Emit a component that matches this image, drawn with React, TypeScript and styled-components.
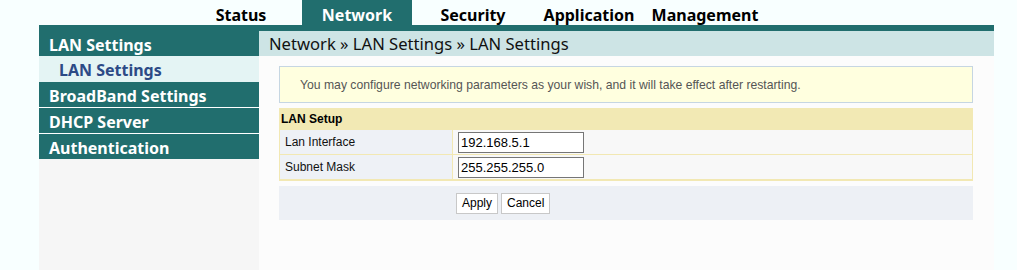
import React from "react";
import styled, { createGlobalStyle } from "styled-components";

const GlobalStyle = createGlobalStyle`
  html, body { margin: 0; padding: 0; background: #f8ffff; }
  body { font-family: "Noto Sans", "Open Sans", sans-serif; }
`;

const TEAL = "#216e6e";
const UI_FONT = `"Noto Sans", "Open Sans", sans-serif`;
const FORM_FONT = `"Liberation Sans", Arial, sans-serif`;

const Page = styled.div`
  padding-left: 39px;
  width: 955px;
  min-height: 270px;
  display: flex;
  flex-direction: column;
`;

const TopNav = styled.nav`
  display: flex;
  height: 25px;
  padding-left: 144px;
`;

const Tab = styled.div`
  width: 116px;
  display: flex;
  justify-content: center;
  padding: 0 3px;
  box-sizing: border-box;
`;

const TabLabel = styled.span<{ $active?: boolean }>`
  flex: 1;
  text-align: center;
  white-space: nowrap;
  font-family: ${UI_FONT};
  font-weight: 700;
  font-size: 16px;
  line-height: 31px;
  height: 25px;
  overflow: visible;
  color: ${(p) => (p.$active ? "#ffffff" : "#000000")};
  background: ${(p) => (p.$active ? TEAL : "transparent")};
`;

const Strip = styled.div`
  height: 6px;
  background: ${TEAL};
`;

const Body = styled.div`
  flex: 1;
  display: flex;
`;

const Sidebar = styled.aside`
  width: 220px;
  background: #f6f6f6;
  display: flex;
  flex-direction: column;
`;

const MenuHead = styled.div<{ $sep?: boolean }>`
  height: 25px;
  line-height: 28px;
  padding-left: 10px;
  background: ${TEAL};
  color: #ffffff;
  font-family: ${UI_FONT};
  font-weight: 700;
  font-size: 16px;
  white-space: nowrap;
  border-top: ${(p) => (p.$sep ? "1px solid #ffffff" : "none")};
`;

const SubItem = styled.div`
  height: 26px;
  line-height: 28px;
  padding-left: 20px;
  background: #e4f4f4;
  color: #2c4a86;
  font-family: ${UI_FONT};
  font-weight: 700;
  font-size: 16px;
`;

const Main = styled.main`
  flex: 1;
  background: #fcfcfc;
  display: flex;
  flex-direction: column;
`;

const Crumb = styled.div`
  height: 25px;
  line-height: 25px;
  padding-left: 10px;
  background: #cde4e5;
  color: #111;
  font-family: ${UI_FONT};
  font-size: 16.6px;
`;

const Content = styled.div`
  padding: 10px 21px 0 20px;
  display: flex;
  flex-direction: column;
`;

const Notice = styled.div`
  height: 35px;
  border: 1px solid #c6d6e2;
  background: #ffffdf;
  display: flex;
  align-items: center;
  padding-left: 20px;
  font-family: ${FORM_FONT};
  font-size: 12.2px;
  color: #555555;
  margin-bottom: 5px;
`;

const Table = styled.div`
  display: grid;
  grid-template-columns: 173px 1fr;
  border: 1px solid #f2e8b3;
  border-top: none;
  border-bottom-width: 2px;
`;

const TableHead = styled.div`
  grid-column: 1 / -1;
  height: 22px;
  line-height: 22px;
  background: #f2e9b4;
  font-family: ${FORM_FONT};
  font-weight: 700;
  font-size: 12px;
  color: #000;
  padding-left: 2px;
  margin: 0 -1px;
`;

const LabelCell = styled.div<{ $last?: boolean }>`
  height: 24px;
  display: flex;
  align-items: center;
  padding-left: 5px;
  background: #eef1f6;
  border-right: 1px solid #f2e8b3;
  border-bottom: ${(p) => (p.$last ? "none" : "1px solid #f2e8b3")};
  font-family: ${FORM_FONT};
  font-size: 12px;
  color: #111;
`;

const ValueCell = styled.div<{ $last?: boolean }>`
  height: 24px;
  display: flex;
  align-items: center;
  padding-left: 5px;
  background: #f8f8f8;
  border-bottom: ${(p) => (p.$last ? "none" : "1px solid #f2e8b3")};
`;

const TextInput = styled.input`
  box-sizing: border-box;
  width: 126px;
  height: 21px;
  border: 1px solid #767676;
  padding: 0 2px;
  font-family: ${FORM_FONT};
  font-size: 13px;
  color: #000;
  background: #fff;
  outline: none;
`;

const ButtonBar = styled.div`
  margin-top: 5px;
  height: 34px;
  background: #edf0f5;
  display: grid;
  grid-template-columns: 177px 1fr;
  align-items: center;
`;

const ButtonGroup = styled.div`
  grid-column: 2;
  display: flex;
  gap: 3px;
`;

const Button = styled.button`
  box-sizing: border-box;
  height: 21px;
  padding: 0 5px;
  border: 1px solid #c8c8c8;
  background: #ffffff;
  font-family: ${FORM_FONT};
  font-size: 12px;
  color: #000;
  cursor: pointer;
`;

const tabs = ["Status", "Network", "Security", "Application", "Management"];

export default function App() {
  return (
    <>
      <GlobalStyle />
      <Page>
        <TopNav>
          {tabs.map((t) => (
            <Tab key={t}>
              <TabLabel $active={t === "Network"}>{t}</TabLabel>
            </Tab>
          ))}
        </TopNav>
        <Strip />
        <Body>
          <Sidebar>
            <MenuHead>LAN Settings</MenuHead>
            <SubItem>LAN Settings</SubItem>
            <MenuHead>BroadBand Settings</MenuHead>
            <MenuHead $sep>DHCP Server</MenuHead>
            <MenuHead $sep>Authentication</MenuHead>
          </Sidebar>
          <Main>
            <Crumb>Network » LAN Settings » LAN Settings</Crumb>
            <Content>
              <Notice>
                You may configure networking parameters as your wish, and it will take effect after restarting.
              </Notice>
              <Table>
                <TableHead>LAN Setup</TableHead>
                <LabelCell>Lan Interface</LabelCell>
                <ValueCell>
                  <TextInput defaultValue="192.168.5.1" />
                </ValueCell>
                <LabelCell $last>Subnet Mask</LabelCell>
                <ValueCell $last>
                  <TextInput defaultValue="255.255.255.0" />
                </ValueCell>
              </Table>
              <ButtonBar>
                <ButtonGroup>
                  <Button>Apply</Button>
                  <Button>Cancel</Button>
                </ButtonGroup>
              </ButtonBar>
            </Content>
          </Main>
        </Body>
      </Page>
    </>
  );
}
